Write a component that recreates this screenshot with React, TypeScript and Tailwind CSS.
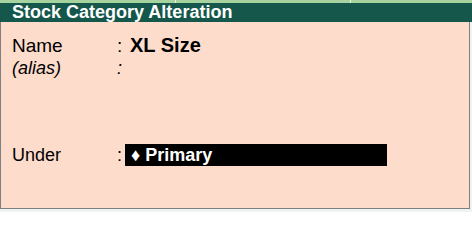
export default function App() {
  return (
    <div className="w-[472px] h-[212px] bg-[#eef4f4] font-['Liberation_Sans',Arial,sans-serif] text-black overflow-hidden">
      {/* top tab strip */}
      <div className="flex h-[3px] bg-[#a6d3a0]">
        <div className="w-[176px] border-r border-[#e8f3e6]" />
        <div className="w-[175px] border-r border-[#e8f3e6]" />
        <div className="flex-1" />
      </div>

      <div className="h-[19px] bg-[#15574b] pl-3 text-[18px] font-bold leading-[19px] text-white">
        Stock Category Alteration
      </div>

      <div className="w-[470px] h-[187px] bg-[#fedccc] border-l border-r border-b border-[#808080] pt-[12px] pl-[11px]">
        <div className="flex text-[19px] leading-[23px]">
          <span className="w-[105px]">Name</span>
          <span className="w-[8px]">:</span>
          <span className="ml-[5px] text-[20px] font-bold">XL Size</span>
        </div>
        <div className="flex text-[18px] leading-[23px]">
          <span className="w-[105px] italic">(alias)</span>
          <span className="w-[8px] italic">:</span>
        </div>
        <div className="mt-[64px] flex text-[18px] leading-[22px]">
          <span className="w-[105px]">Under</span>
          <span className="w-[8px]">:</span>
          <div className="w-[262px] h-[22px] bg-black px-[6px] font-bold text-white">
            ♦ Primary
          </div>
        </div>
      </div>
    </div>
  );
}
